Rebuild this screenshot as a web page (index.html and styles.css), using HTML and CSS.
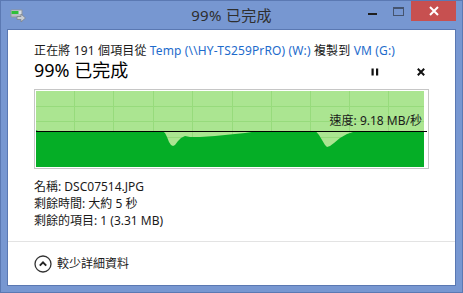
FILE: index.html
```html
<!DOCTYPE html>
<html lang="zh-Hant">

<head>
    <meta charset="UTF-8">
    <meta name="viewport" content="width=device-width, initial-scale=1.0">
    <title>99% 已完成</title>
    <link rel="stylesheet" href="styles.css">
</head>

<body>
    <div class="window">
        <div class="titlebar">
            <div class="tb-left">
                <svg class="app-icon" width="16" height="15" viewBox="0 0 16 15">
                    <rect x="0.5" y="1.5" width="12" height="8" rx="1" fill="#8f969e" />
                    <rect x="1.5" y="2.5" width="10" height="4" fill="#d9dde2" />
                    <rect x="1.5" y="3" width="7" height="3" fill="#2fbf3a" />
                    <rect x="1.5" y="6.5" width="10" height="2" fill="#b8bec6" />
                    <path d="M7 8.5h4v-2.5l4.5 4l-4.5 4v-2.5h-4z" fill="#c9ced4" stroke="#7c838c" stroke-width="0.8" />
                </svg>
            </div>
            <div class="tb-title">99% 已完成</div>
            <div class="tb-controls">
                <span class="ctl ctl-min"><i></i></span>
                <span class="ctl ctl-max"><i></i></span>
                <span class="ctl ctl-close">
                    <svg width="10" height="10" viewBox="0 0 10 10">
                        <path d="M1 1l8 8M9 1l-8 8" stroke="#fff" stroke-width="2" />
                    </svg>
                </span>
            </div>
        </div>

        <div class="client">
            <div class="main">
                <p class="summary">正在將 191 個項目從 <a href="#">Temp (\\HY-TS259PrRO) (W:)</a> 複製到 <a href="#">VM (G:)</a></p>

                <div class="status-row">
                    <h1>99% 已完成</h1>
                    <div class="actions">
                        <span class="action">
                            <svg width="8" height="8" viewBox="0 0 8 8">
                                <rect x="0.5" y="0.5" width="2.2" height="7" fill="#111" />
                                <rect x="5" y="0.5" width="2.2" height="7" fill="#111" />
                            </svg>
                        </span>
                        <span class="action">
                            <svg width="8" height="8" viewBox="0 0 8 8">
                                <path d="M0.8 0.8l6.4 6.4M7.2 0.8l-6.4 6.4" stroke="#111" stroke-width="2" />
                            </svg>
                        </span>
                    </div>
                </div>

                <div class="graph">
                    <svg width="391" height="76" viewBox="0 0 391 76">
                        <rect x="0" y="0" width="388" height="76" fill="#abe591" />
                        <g stroke="#97db7c" stroke-width="1">
                            <path d="M38.5 0v76M77.5 0v76M117.5 0v76M156.5 0v76M196.5 0v76M235.5 0v76M274.5 0v76M313.5 0v76M352.5 0v76" />
                            <path d="M0 15.5h388M0 30.5h388M0 46.5h388M0 61.5h388" />
                        </g>
                        <polygon fill="#05ae26" points="0,39 2,40 127,40.5 129,42 131,46 133,51 135,54 137,55 139,54 142,50 145,47 149,45 154,46 164,46 179,45 189,44 199,43 209,42 219,40.5 280,40.5 283,44 286,49 289,54 291,56 294,55 298,52 304,47 311,43 317,41 388,41 388,76 0,76" />
                        <path d="M0 40.5h391" stroke="#000" stroke-width="1" />
                    </svg>
                    <span class="speed">速度: 9.18 MB/秒</span>
                </div>

                <div class="details">
                    <div>名稱: DSC07514.JPG</div>
                    <div>剩餘時間: 大約 5 秒</div>
                    <div>剩餘的項目: 1 (3.31 MB)</div>
                </div>
            </div>

            <div class="footer">
                <svg class="toggle" width="18" height="18" viewBox="0 0 18 18">
                    <circle cx="9" cy="9" r="8" fill="none" stroke="#333" stroke-width="1.3" />
                    <path d="M5.8 10.6L9 7.4l3.2 3.2" fill="none" stroke="#222" stroke-width="2" />
                </svg>
                <span>較少詳細資料</span>
            </div>
        </div>
    </div>
</body>

</html>
```

FILE: styles.css
```css
* {
    box-sizing: border-box;
    font-family: 'Noto Sans', 'Noto Sans CJK TC', sans-serif;
}

body {
    margin: 0;
    color: #1a1a1a;
}

.window {
    display: flex;
    flex-direction: column;
    width: 463px;
    height: 293px;
    border: 1px solid #5b79b3;
    background-color: #7797d1;
}

.titlebar {
    display: grid;
    grid-template-columns: 1fr auto 1fr;
    align-items: center;
    height: 28px;
}

.tb-left {
    display: flex;
    padding-left: 9px;
}

.app-icon {
    display: block;
}

.tb-title {
    color: #2e2e2e;
    font-size: 15px;
    line-height: 20px;
    letter-spacing: 0.02em;
}

.tb-controls {
    display: flex;
    align-self: start;
    justify-content: flex-end;
    padding-right: 6px;
}

.ctl {
    display: flex;
    justify-content: center;
    width: 26px;
    height: 20px;
}

.ctl-min i {
    width: 9px;
    height: 2px;
    margin-top: 12px;
    background-color: #1f1f1f;
}

.ctl-max i {
    width: 11px;
    height: 9px;
    margin-top: 6px;
    border: 1px solid #45546f;
    border-top-width: 2px;
}

.ctl-close {
    align-items: center;
    width: 45px;
    background-color: #c75050;
}

.client {
    display: flex;
    flex: 1;
    flex-direction: column;
    margin: 0 6px 6px;
    border: 1px solid #5a78b2;
    background-color: #fff;
}

.main {
    flex: 1;
    padding: 13px 26px 0;
}

.summary {
    margin: 0;
    font-size: 12px;
    line-height: 16px;
    letter-spacing: 0.012em;
    white-space: nowrap;
}

.summary a {
    color: #1e6bcc;
    text-decoration: none;
}

.status-row {
    display: flex;
    align-items: center;
    justify-content: space-between;
    margin-bottom: 8px;
}

h1 {
    margin: 0;
    color: #000;
    font-size: 18px;
    font-weight: 400;
    line-height: 22px;
}

.actions {
    display: flex;
    gap: 30px;
    padding-top: 4px;
}

.action {
    display: flex;
    justify-content: center;
    width: 16px;
}

.graph {
    position: relative;
    height: 80px;
    padding: 1px;
    border: 1px solid #c6c6c6;
}

.graph svg {
    display: block;
}

.speed {
    position: absolute;
    top: 23px;
    right: 6px;
    font-size: 12px;
    line-height: 16px;
    white-space: nowrap;
}

.details {
    margin-top: 9px;
    font-size: 12px;
    line-height: 17px;
}

.footer {
    display: flex;
    align-items: center;
    gap: 5px;
    padding: 13px 26px 12px;
    border-top: 1px solid #e3e3e3;
    font-size: 12px;
    line-height: 18px;
}

.toggle {
    display: block;
}
```
